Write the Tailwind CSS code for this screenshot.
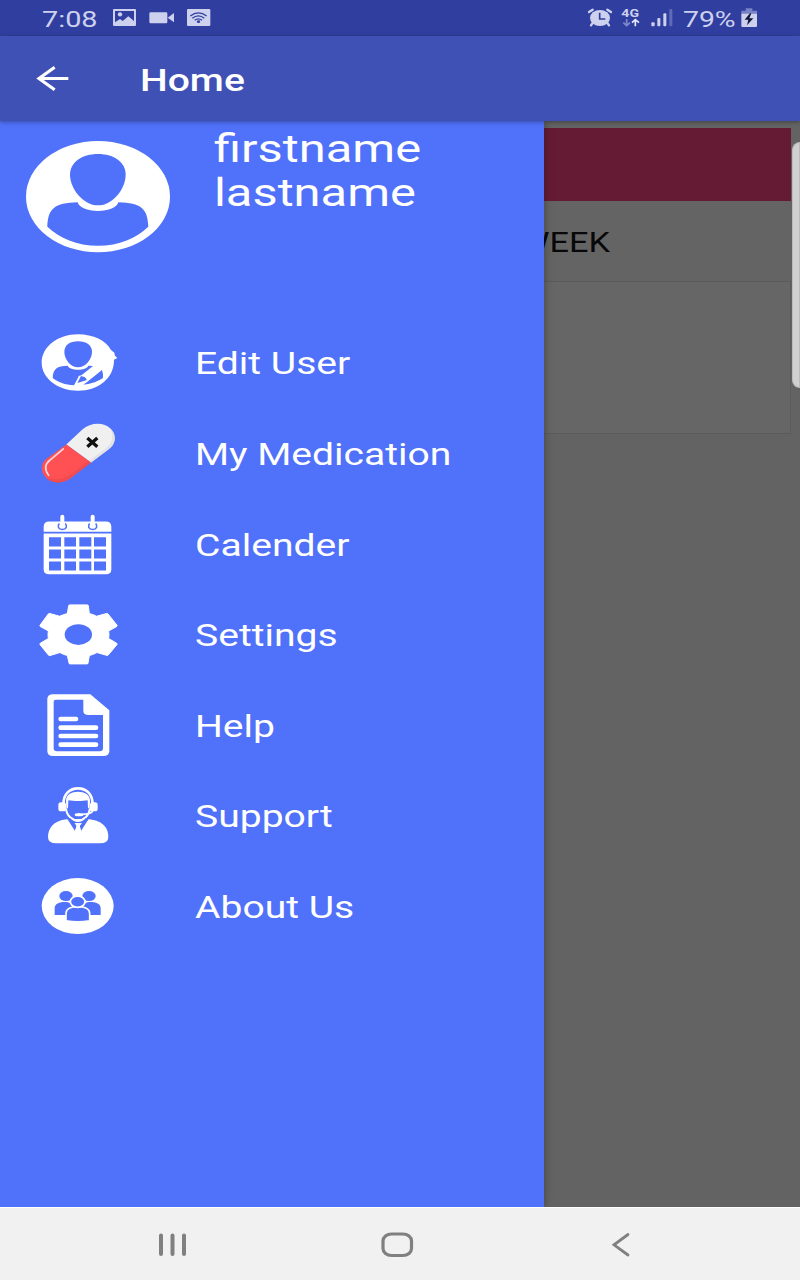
<!DOCTYPE html>
<html lang="en">
<head>
<meta charset="utf-8">
<meta name="viewport" content="width=device-width">
<title>Home</title>
<script src="https://cdn.jsdelivr.net/npm/@tailwindcss/browser@4"></script>
</head>
<body class="w-[800px] h-[1280px] overflow-hidden flex flex-col bg-[#666] font-['Roboto',sans-serif]">

<!-- Status bar -->
<div class="h-[36px] shrink-0 bg-[#303f9f] flex items-center justify-between pl-[42px] pr-[41px] text-[#cdd1ee] text-[22.500px] leading-none">
  <div class="flex items-center h-full">
    <div class="w-[70px]"><span class="inline-block origin-left scale-x-[1.28] translate-y-[0.500px]">7:08</span></div>
    <svg class="w-[100px] h-[36px]" viewBox="336 0 300 108">
      <g fill="#cdd1ee">
        <path fill-rule="evenodd" d="M342 27H405Q408 27 408 30V75Q408 78 405 78H342Q339 78 339 75V30Q339 27 342 27ZM345 33V67L360 57L368 63L385 49L402 63V33Z"/>
        <circle cx="360" cy="43" r="6.500"/>
        <rect x="448" y="37" width="54" height="33" rx="4"/>
        <path d="M503 53L522 39V67Z"/>
        <rect x="561" y="27" width="70" height="51" rx="3"/>
      </g>
      <g fill="none" stroke="#303f9f" stroke-width="4"><path d="M571 48Q595 29 620 48"/><path d="M577 55Q595 40 613 55"/><path d="M584 61Q595 52 606 61"/></g>
      <ellipse cx="595.500" cy="65" rx="5" ry="4" fill="#303f9f"/>
    </svg>
  </div>
  <div class="flex items-center h-full">
    <svg class="w-[96px] h-[36px]" viewBox="81 0 288 108">
      <g fill="#cdd1ee">
        <ellipse cx="120" cy="54" rx="30" ry="24"/>
        <path d="M97 70L93 76M143 70L147 76M87 36L98 29M153 36L142 29" stroke="#cdd1ee" stroke-width="7" stroke-linecap="round"/>
        <text x="184" y="50" font-family="Roboto" font-weight="700" font-size="35" textLength="53" lengthAdjust="spacingAndGlyphs">4G</text>
        <rect x="274" y="67" width="10" height="12" rx="3"/><rect x="292" y="54" width="9" height="25" rx="3"/><rect x="310" y="40" width="9" height="39" rx="3"/>
        <rect x="328" y="27" width="9" height="52" rx="3" fill="#5f6bb8"/>
      </g>
      <path d="M119 38V57H136" fill="none" stroke="#303f9f" stroke-width="5"/>
      <path d="M200 57V76M190 68L200 77L210 68" fill="none" stroke="#7f89cb" stroke-width="5"/>
      <path d="M226 79V60M216 68L226 59L237 68" fill="none" stroke="#e8eafa" stroke-width="5"/>
    </svg>
    <div class="w-[58px]"><span class="inline-block origin-left scale-x-[1.26] translate-y-[0.500px]">79%</span></div>
    <svg class="w-[18px] h-[36px]" viewBox="546 0 54 108">
      <path d="M560 25H580V32H594V42H547V32H560Z" fill="#7781c5"/>
      <path d="M547 41H594V78Q594 81 591 81H550Q547 81 547 78Z" fill="#cdd1ee"/>
      <path d="M573 40L557 59H568L564 76L583 55H571L577 40Z" fill="#10153a"/>
    </svg>
  </div>
</div>

<!-- App bar -->
<header class="h-[85px] shrink-0 bg-[#3f51b5] flex items-center relative z-10 shadow-[0_1px_4px_rgba(0,0,0,0.35)]">
  <svg class="ml-[34px] w-[40px] h-[30px]" viewBox="102 191.500 120 90" fill="none" stroke="#fff" stroke-width="9.500"><path d="M205 235H118M164 201L117 235L164 269"/></svg>
  <h1 class="ml-[66px] text-[31px] leading-none font-medium text-white origin-left scale-x-[1.26] translate-y-[2px]">Home</h1>
</header>

<main class="flex-1 min-h-0 flex">
  <!-- Navigation drawer -->
  <nav class="w-[544px] shrink-0 bg-[#5071f9] relative z-[5] shadow-[0_0_8px_rgba(0,0,0,0.35)] text-white">
    <div class="h-[197.400px] flex items-start">
      <svg class="w-[214px] h-[150px] shrink-0" viewBox="0 3 642 450">
        <ellipse cx="294" cy="230" rx="216" ry="167" fill="#fff"/>
        <g fill="#5071f9">
          <path d="M294 102C343 102 377 127 377 164C377 205 339 256 294 256C249 256 210 205 210 164C210 127 245 102 294 102Z"/>
          <path d="M142 320C144 266 163 249 233 247C237 263 262 273 294 273C326 273 351 263 355 247C424 249 443 266 445 320C410 354 357 377 294 377C231 377 178 354 142 320Z"/>
        </g>
      </svg>
      <p class="mt-[5.500px] text-[38px] leading-[44.500px] origin-left scale-x-[1.285]">firstname<br>lastname</p>
    </div>
    <ul class="flex flex-col">
      <li class="h-[90.600px] flex items-center">
        <svg class="ml-5 w-[120px] h-[90.600px]" viewBox="0 -5 360 271.800">
          <path d="M174 44C220 44 258 63 273 91L283 99L285 108L292 115L282 120C283 174 236 213 174 213C113 213 65 175 65 129C65 82 113 44 174 44Z" fill="#fff"/>
          <g fill="#5071f9"><path d="M174 65C199 65 216 77 216 97C216 119 196 143 174 143C152 143 133 119 133 97C133 77 149 65 174 65Z"/>
          <path d="M98 175C99 148 111 138 143 138C149 154 199 154 205 138L219 139L175 174L162 197C136 196 113 187 98 175Z"/>
          <path d="M202 186L246 151Q250 162 249 175Q228 190 190 195Z"/></g>
          <path d="M164 195L177 168L190 167L202 180L198 187Z" fill="#fff"/>
          <path d="M172 190L183 169L195 173L201 181Z" fill="#5071f9"/>
        </svg>
        <span class="ml-[55px] text-[31px] origin-left scale-x-[1.26] translate-y-[1px]">Edit User</span>
      </li>
      <li class="h-[90.600px] flex items-center">
        <svg class="ml-5 w-[120px] h-[90.600px]" viewBox="0 -3.300 360 271.800">
          <path d="M139 103L187 58C212 36 252 35 272 56C291 76 288 103 264 119L213 157Z" fill="#f0f0f0"/>
          <path d="M139 103L213 157L160 198C135 221 99 223 79 204C59 184 61 158 84 143Z" fill="#ff5053"/>
          <path d="M213 157L160 198C135 221 99 223 79 204C112 213 139 203 160 188L206 152Z" fill="#f04b50"/>
          <path d="M213 157L264 119C288 103 291 76 272 56C283 84 275 101 257 115L207 152Z" fill="#e2e2e2"/>
          <path d="M130 116L91 149C74 162 73 178 86 196" fill="none" stroke="#ffd9da" stroke-width="5" stroke-linecap="round"/>
          <path d="M202 84L232 110M232 84L202 110" stroke="#111" stroke-width="10"/>
        </svg>
        <span class="ml-[55px] text-[31px] origin-left scale-x-[1.26] translate-y-[1px]">My Medication</span>
      </li>
      <li class="h-[90.600px] flex items-center">
        <svg class="ml-5 w-[120px] h-[90.600px]" viewBox="0 -1.500 360 271.800">
          <path d="M88 63H257Q274 63 274 79V94H71V79Q71 63 88 63Z" fill="#fff"/>
          <path fill="#fff" d="M71 99H274V207Q274 221 258 221H87Q71 221 71 207Z"/>
          <g fill="#5071f9">
            <path d="M87 110h36v28h-36zM133 110h35v28h-35zM178 110h36v28h-36zM222 110h36v28h-36zM87 147h36v27h-36zM133 147h35v27h-35zM178 147h36v27h-36zM222 147h36v27h-36zM87 183h36v27h-36zM133 183h35v27h-35zM178 183h36v27h-36zM222 183h36v27h-36z"/>
          </g>
          <g fill="none" stroke="#5071f9" stroke-width="5"><path d="M118 69C111 77 115 87 127 87C139 87 143 77 136 69"/><path d="M209 69C202 77 206 87 218 87C230 87 234 77 227 69"/></g>
          <path d="M127 49V74M218 49V74" stroke="#fff" stroke-width="12" stroke-linecap="round"/>
        </svg>
        <span class="ml-[55px] text-[31px] origin-left scale-x-[1.26] translate-y-[1px]">Calender</span>
      </li>
      <li class="h-[90.600px] flex items-center">
        <svg class="ml-5 w-[120px] h-[90.600px]" viewBox="0 .300 360 271.800">
          <path fill="#fff" stroke="#fff" stroke-width="3" stroke-linejoin="round" d="M149 45H202Q205 45 205 48L208 71Q220 74 230 79L259 71Q262 70 264 72L291 106Q292 108 290 110L266 123Q268 134 266 146L290 160Q292 162 291 164L265 195Q262 198 259 196L231 188Q220 194 208 197L204 220Q204 222 201 222H150Q147 222 147 219L142 197Q130 194 120 188L90 197Q87 198 85 195L60 164Q59 162 61 160L85 146Q83 134 85 123L61 110Q59 108 60 106L85 72Q87 70 90 71L119 79Q130 74 142 71L146 48Q146 45 149 45Z"/>
          <ellipse cx="175" cy="134" rx="41" ry="31" fill="#5071f9"/>
        </svg>
        <span class="ml-[55px] text-[31px] origin-left scale-x-[1.26] translate-y-[1px]">Settings</span>
      </li>
      <li class="h-[90.600px] flex items-center">
        <svg class="ml-5 w-[120px] h-[90.600px]" viewBox="0 2.100 360 271.800">
          <path d="M99 42H211L268 90V212Q268 227 250 227H99Q82 227 82 212V57Q82 42 99 42Z" fill="#fff"/>
          <path d="M107 58H190V91Q190 104 206 104H249V203Q249 213 239 213H111Q101 213 101 204V64Q101 58 107 58Z" fill="#5071f9"/>
          <path d="M122 116H168M122 142H228M122 167H228M122 193H228" stroke="#fff" stroke-width="14" stroke-linecap="round"/>
        </svg>
        <span class="ml-[55px] text-[31px] origin-left scale-x-[1.26] translate-y-[1px]">Help</span>
      </li>
      <li class="h-[90.600px] flex items-center">
        <svg class="ml-5 w-[120px] h-[90.600px]" viewBox="0 3.900 360 271.800">
          <path d="M131 104C126 40 222 40 217 104" fill="none" stroke="#fff" stroke-width="8"/>
          <path d="M138 92C139 74 155 66 174 66C193 66 209 74 210 92L209 116L204 116L203 92C186 95 162 95 145 92L144 116L139 116Z" fill="#fff"/>
          <rect x="115" y="98" width="23" height="27" rx="8" fill="#fff"/><rect x="210" y="98" width="23" height="27" rx="8" fill="#fff"/>
          <path d="M138 116C140 139 157 152 174 152C191 152 207 139 210 116" fill="none" stroke="#fff" stroke-width="6"/>
          <path d="M219 122C216 132 204 134 185 134" fill="none" stroke="#fff" stroke-width="5"/>
          <ellipse cx="177" cy="135" rx="13" ry="5" fill="#fff"/>
          <path d="M140 149L208 149C253 154 266 180 265 202Q265 221 240 221H109Q84 221 84 202C84 178 99 153 140 149Z" fill="#fff"/>
          <path d="M142 148L165 184L170 168L164 161H186L179 168L183 184L206 148L198 145Q187 157 174 157Q161 157 150 145Z" fill="#5071f9"/>
          <path d="M164 161H185L179 168L183 184H165L170 168Z" fill="#fff"/>
        </svg>
        <span class="ml-[55px] text-[31px] origin-left scale-x-[1.26] translate-y-[1px]">Support</span>
      </li>
      <li class="h-[90.600px] flex items-center">
        <svg class="ml-5 w-[120px] h-[90.600px]" viewBox="0 5.700 360 271.800">
          <ellipse cx="173" cy="138" rx="108" ry="84" fill="#fff"/>
          <g fill="#5071f9"><ellipse cx="138" cy="108" rx="20" ry="15"/><ellipse cx="207" cy="108" rx="20" ry="15"/>
          <path d="M104 165V145C104 131 117 126 138 126Q160 126 160 165ZM242 165V145C242 131 229 126 208 126Q186 126 186 165Z"/></g>
          <g fill="#5071f9" stroke="#fff" stroke-width="5"><path d="M138 182V160C138 146 150 140 173 140C196 140 209 146 209 160V182Q173 188 138 182Z"/><ellipse cx="173" cy="125" rx="22" ry="17"/></g>
        </svg>
        <span class="ml-[55px] text-[31px] origin-left scale-x-[1.26] translate-y-[1px]">About Us</span>
      </li>
    </ul>
  </nav>

  <!-- Dimmed content behind the drawer -->
  <section class="flex-1 flex bg-[#636363] overflow-hidden">
    <div class="w-[247px] shrink-0 pt-[7px]">
      <div class="h-[73px] bg-[#651b33]"></div>
      <div class="h-[80px] bg-[#646464] flex items-center">
        <span class="-ml-[25.500px] text-[27px] text-[#080808] origin-left scale-x-[1.27] translate-y-[2px]">WEEK</span>
      </div>
      <div class="h-[153px] bg-[#666] border-t border-r border-b border-[#5b5b5b]"></div>
    </div>
    <div class="ml-[1px] mt-[20.500px] w-[12px] h-[246px] rounded-l-lg bg-[#d0d0d0] border border-[#bbb]"></div>
  </section>
</main>

<!-- System navigation -->
<footer class="h-[73px] shrink-0 bg-[#f1f1f1] border-t border-white relative z-10">
  <svg class="w-[800px] h-[72px]" viewBox="0 1208 800 72" fill="none" stroke="#808080">
    <path d="M161 1235.500V1254M172.500 1235.500V1254M184 1235.500V1254" stroke-width="4" stroke-linecap="round"/>
    <rect x="383" y="1234" width="28.500" height="21.500" rx="8.500" ry="7" stroke-width="3.200"/>
    <path d="M628 1234.500L614 1244.800L628 1255" stroke-width="2.800" stroke-linecap="round"/>
  </svg>
</footer>
</body>
</html>
